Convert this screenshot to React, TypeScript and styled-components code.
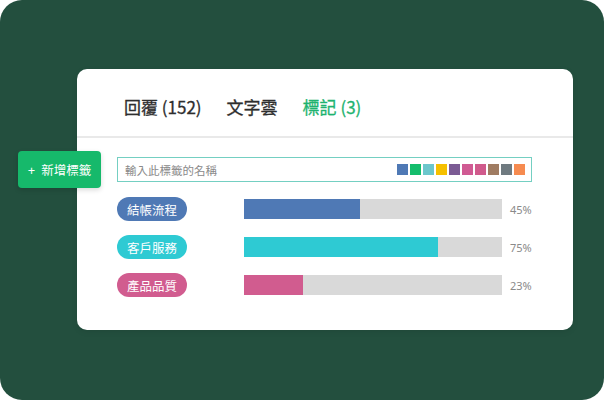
import React from "react";
import styled, { createGlobalStyle } from "styled-components";

const GlobalStyle = createGlobalStyle`
  html, body {
    margin: 0;
    padding: 0;
    background: #ffffff;
  }
  body {
    font-family: "Noto Sans CJK TC", "Noto Sans", sans-serif;
  }
`;

const swatches = [
  "#4f79b5",
  "#14bd6c",
  "#6cc7cc",
  "#f6c000",
  "#7b5b94",
  "#d05a93",
  "#d05a8c",
  "#a07c62",
  "#6f7a80",
  "#f68b50",
];

const tags = [
  { name: "結帳流程", color: "#4f79b5", pct: 45 },
  { name: "客戶服務", color: "#2ecad3", pct: 75 },
  { name: "產品品質", color: "#d15c8f", pct: 23 },
];

const App = () => {
  return (
    <>
      <GlobalStyle />
      <Stage>
        <Card>
          <Tabs>
            <Tab>回覆 (152)</Tab>
            <Tab>文字雲</Tab>
            <Tab active>標記 (3)</Tab>
          </Tabs>
          <Body>
            <AddButton>
              <Plus>+</Plus>新增標籤
            </AddButton>
            <InputBox>
              <Placeholder>輸入此標籤的名稱</Placeholder>
              <Swatches>
                {swatches.map((c) => (
                  <Swatch key={c} color={c} />
                ))}
              </Swatches>
            </InputBox>
            <Rows>
              {tags.map((t) => (
                <Row key={t.name}>
                  <Pill color={t.color}>{t.name}</Pill>
                  <Track>
                    <Fill color={t.color} style={{ width: `${t.pct}%` }} />
                  </Track>
                  <Pct>{t.pct}%</Pct>
                </Row>
              ))}
            </Rows>
          </Body>
        </Card>
      </Stage>
    </>
  );
};

export default App;

const Stage = styled.div`
  width: 604px;
  height: 400px;
  background-color: #234f3e;
  border-radius: 22px;
  box-sizing: border-box;
  padding: 69px 32px 0 77px;
`;

const Card = styled.div`
  position: relative;
  width: 496px;
  height: 261px;
  background-color: #ffffff;
  border-radius: 10px;
  box-shadow: 0 2px 6px rgba(0, 0, 0, 0.08);
`;

const Tabs = styled.div`
  display: flex;
  align-items: center;
  gap: 25px;
  height: 69px;
  padding: 8px 0 0 47px;
  box-sizing: border-box;
  border-bottom: 2px solid #e9e9e9;
`;

const Tab = styled.div<{ active?: boolean }>`
  font-size: 17px;
  font-weight: 400;
  -webkit-text-stroke: 0.3px currentColor;
  color: ${(p) => (p.active ? "#1eb36f" : "#2e2e2e")};
`;

const Body = styled.div`
  padding: 19px 41px 0 40px;
`;

const AddButton = styled.div`
  position: absolute;
  left: -59px;
  top: 82px;
  width: 83px;
  height: 37px;
  background-color: #16b96b;
  border-radius: 4px;
  color: #ffffff;
  font-size: 12.5px;
  display: flex;
  align-items: center;
  justify-content: center;
  box-shadow: 0 2px 5px rgba(0, 0, 0, 0.15);
`;

const Plus = styled.span`
  font-family: "Noto Sans", sans-serif;
  font-size: 13px;
  margin-right: 6px;
`;

const InputBox = styled.div`
  height: 25px;
  border: 1px solid #74cfc2;
  box-sizing: border-box;
  display: flex;
  align-items: center;
  justify-content: space-between;
  padding: 0 6px 0 7px;
`;

const Placeholder = styled.span`
  font-size: 11.5px;
  color: #8a8a8a;
`;

const Swatches = styled.div`
  display: flex;
  gap: 2px;
`;

const Swatch = styled.div<{ color: string }>`
  width: 11px;
  height: 11px;
  background-color: ${(p) => p.color};
`;

const Rows = styled.div`
  display: flex;
  flex-direction: column;
  gap: 14px;
  padding-top: 15px;
`;

const Row = styled.div`
  display: flex;
  align-items: center;
  height: 24px;
`;

const Pill = styled.div<{ color: string }>`
  width: 70px;
  height: 24px;
  border-radius: 12px;
  background-color: ${(p) => p.color};
  color: #ffffff;
  font-size: 12.5px;
  display: flex;
  align-items: center;
  justify-content: center;
  margin-right: 57px;
`;

const Track = styled.div`
  width: 258px;
  height: 20px;
  background-color: #d9d9d9;
`;

const Fill = styled.div<{ color: string }>`
  height: 100%;
  background-color: ${(p) => p.color};
`;

const Pct = styled.span`
  margin-left: 8px;
  font-family: "Noto Sans", sans-serif;
  font-size: 11px;
  color: #8a8a8a;
`;
